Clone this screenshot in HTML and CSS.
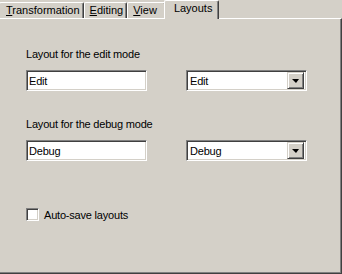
FILE: index.html
```html
<!DOCTYPE html>
<html lang="en">
<head>
    <meta charset="UTF-8">
    <title>Layouts</title>
    <link rel="stylesheet" href="styles.css">
</head>
<body>
    <div class="tabs">
        <div class="tab tab-first"><u>T</u>ransformation</div>
        <div class="tab"><u>E</u>diting</div>
        <div class="tab tab-view"><u>V</u>iew</div>
        <div class="tab active">Layouts</div>
    </div>
    <div class="panel">
        <div class="group">
            <div class="label">Layout for the edit mode</div>
            <div class="row">
                <input class="textbox" type="text" value="Edit">
                <div class="combo">
                    <span class="combo-text">Edit</span>
                    <span class="combo-btn"><span class="arrow"></span></span>
                </div>
            </div>
        </div>
        <div class="group">
            <div class="label">Layout for the debug mode</div>
            <div class="row">
                <input class="textbox" type="text" value="Debug">
                <div class="combo">
                    <span class="combo-text">Debug</span>
                    <span class="combo-btn"><span class="arrow"></span></span>
                </div>
            </div>
        </div>
        <label class="check">
            <input type="checkbox">
            <span>Auto-save layouts</span>
        </label>
    </div>
</body>
</html>
```

FILE: styles.css
```css
body {
    margin: 0;
    width: 342px;
    height: 274px;
    overflow: hidden;
    background: #d4d0c8;
    font-family: "Liberation Sans", Arial, sans-serif;
    font-size: 11px;
    letter-spacing: -0.2px;
    color: #000;
}

/* tab strip */
.tabs {
    display: flex;
    align-items: flex-end;
    height: 18px;
    margin-left: -1px;
}
.tab {
    height: 15px;
    line-height: 15px;
    padding: 0 3px 0 5px;
    border-top: 1px solid #fff;
    border-left: 1px solid #fff;
    border-right: 1px solid #404040;
    box-shadow: inset -1px 0 #808080;
    border-radius: 2px 2px 0 0;
    white-space: nowrap;
    letter-spacing: 0;
}
.tab u {
    text-decoration-thickness: 1px;
    text-underline-offset: 1px;
}
.tab-first {
    padding-left: 6px;
}
.tab-view {
    padding-right: 8px;
}
.tab.active {
    position: relative;
    z-index: 1;
    height: 18px;
    line-height: 14px;
    margin: 0 0 -1px -2px;
    padding: 0 6px 0 9px;
    background: #d4d0c8;
}

/* page */
.panel {
    box-sizing: border-box;
    height: 256px;
    border-top: 1px solid #fff;
    border-right: 1px solid #404040;
    border-bottom: 1px solid #404040;
    box-shadow: inset -1px -1px #808080;
    padding: 29px 0 0 26px;
}
.group {
    margin-bottom: 27px;
}
.label {
    line-height: 13px;
    margin-bottom: 9px;
}
.row {
    display: flex;
    gap: 39px;
}
.textbox, .combo {
    box-sizing: border-box;
    width: 121px;
    height: 21px;
    border: 1px solid;
    border-color: #808080 #fff #fff #808080;
    box-shadow: inset 1px 1px #404040, inset -1px -1px #d4d0c8;
    background: #fff;
}
.textbox {
    margin: 0;
    padding: 0 2px;
    font: inherit;
    letter-spacing: inherit;
    color: #000;
    outline: none;
}
.combo {
    display: flex;
    align-items: center;
    padding: 2px;
}
.combo-text {
    flex: 1;
    padding-left: 1px;
}
.combo-btn {
    box-sizing: border-box;
    width: 17px;
    height: 17px;
    display: flex;
    align-items: center;
    justify-content: center;
    background: #d4d0c8;
    border: 1px solid;
    border-color: #d4d0c8 #404040 #404040 #d4d0c8;
    box-shadow: inset 1px 1px #fff, inset -1px -1px #808080;
}
.arrow {
    width: 0;
    height: 0;
    border-left: 4px solid transparent;
    border-right: 3px solid transparent;
    border-top: 4px solid #000;
    margin-top: 1px;
}

.check {
    display: flex;
    align-items: center;
    gap: 5px;
    margin-top: 47px;
}
.check input {
    appearance: none;
    margin: 0;
    width: 13px;
    height: 13px;
    border: 1px solid;
    border-color: #808080 #fff #fff #808080;
    box-shadow: inset 1px 1px #404040, inset -1px -1px #d4d0c8;
    background: #fff;
}
```
